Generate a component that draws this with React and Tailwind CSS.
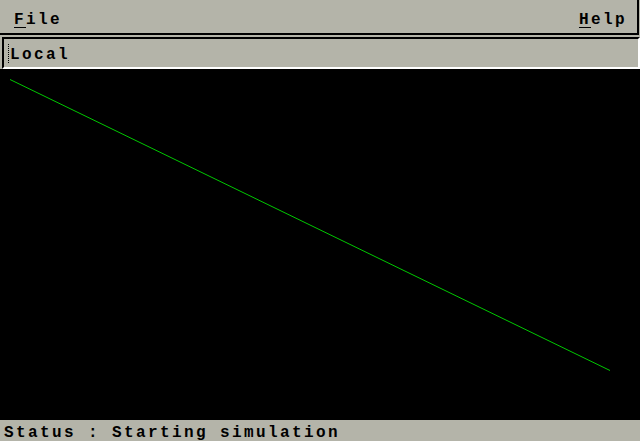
const mono = { fontFamily: '"Liberation Mono", "DejaVu Sans Mono", monospace' };

function MenuItem({ label }) {
  return (
    <span className="font-bold text-black">
      <span className="underline decoration-1 underline-offset-[3px]">{label[0]}</span>
      {label.slice(1)}
    </span>
  );
}

export default function App() {
  return (
    <div
      className="flex h-[441px] w-[640px] flex-col overflow-hidden bg-[#b4b4a9] text-[16px] leading-none tracking-[2.4px]"
      style={mono}
    >
      <div className="flex h-[35px] w-[639px] shrink-0 items-start justify-between border-r-2 border-b-2 border-black bg-[#b4b4a9] pt-[12px] pl-[14px] pr-[10px]">
        <MenuItem label="File" />
        <MenuItem label="Help" />
      </div>

      <div className="mt-[2px] ml-[2px] flex h-[32px] shrink-0 items-start border-t-2 border-l-2 border-r-2 border-b-2 border-t-black border-l-black border-r-white border-b-white bg-[#b4b4a9] pt-[8px] pl-[4px]">
        <span className="mr-[1px] mt-[-3px] h-[19px] border-l border-dotted border-black" />
        <span className="font-bold text-black">Local</span>
      </div>

      <div className="relative flex-1 bg-black">
        <svg className="absolute inset-0" width="640" height="351" viewBox="0 0 640 351">
          <line x1="10" y1="10.5" x2="610" y2="301.5" stroke="#00c800" strokeWidth="1" />
        </svg>
      </div>

      <div className="flex h-[21px] shrink-0 items-start bg-[#b4b4a9] pt-[5px] pl-[4px]">
        <span className="whitespace-pre font-bold text-black">Status : Starting simulation</span>
      </div>
    </div>
  );
}
